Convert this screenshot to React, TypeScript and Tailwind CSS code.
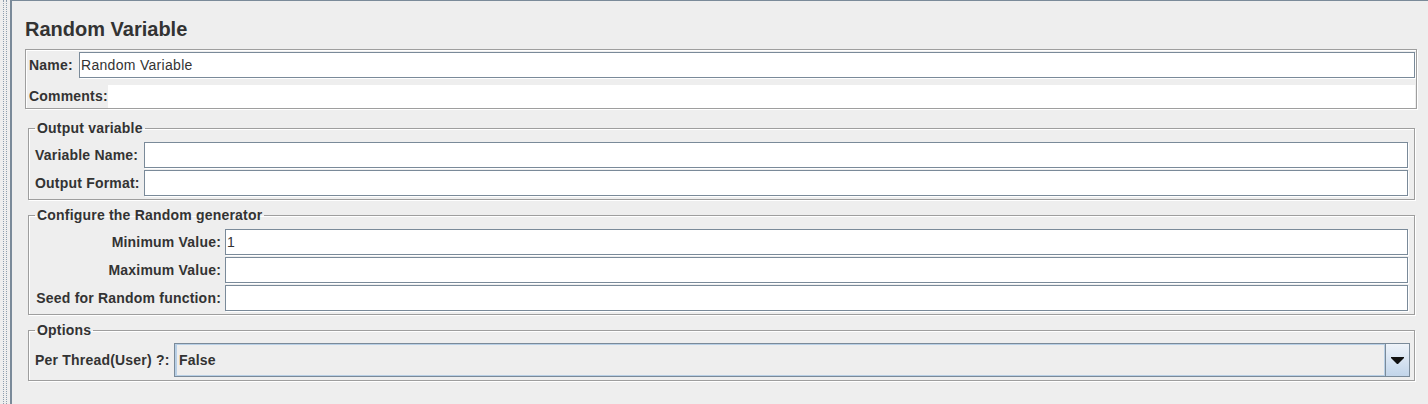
import React from "react";

// etched border like the Swing Metal look: grey line with a white line beside it
const etched = "border border-[#9e9e9e] shadow-[inset_1px_1px_0_#fff,1px_1px_0_#fff]";

function TextField({ value = "" }: { value?: string }) {
  return (
    <input
      readOnly
      value={value}
      className="h-[26px] w-full min-w-0 border border-[#7a8a99] bg-white pl-[1px] text-[14px] tracking-[0.3px] text-[#333] shadow-[1px_1px_0_#fff] outline-none"
    />
  );
}

function Group({ title, className = "", children }: { title: string; className?: string; children: React.ReactNode }) {
  return (
    <fieldset className={`ml-[3px] mr-[2px] pl-[6px] ${etched} ${className}`}>
      <legend className="px-[2px] text-[14px] font-bold leading-[16px] tracking-[0.2px] text-[#333]">{title}</legend>
      {children}
    </fieldset>
  );
}

export default function App() {
  return (
    <div className="flex h-[404px] w-[1428px] overflow-hidden bg-[#eeeeee] font-['Liberation_Sans',Arial,sans-serif] text-[#333]">
      {/* split pane handle */}
      <div className="flex w-[10px] shrink-0">
        <div className="ml-[3px] w-[4px] border-x border-dotted border-[#8e9eae]" />
      </div>

      <main className="flex min-w-0 flex-1 flex-col border-l-2 border-t border-[#7a8a99] pl-[13px] pr-[11px]">
        <h1 className="pt-[16px] text-[20px] font-bold leading-[24px]">Random Variable</h1>

        {/* Name / comments */}
        <div className={`mt-[8px] pl-[3px] pr-[1px] pt-[2px] tracking-[0.2px] ${etched}`}>
          <div className="flex items-center">
            <label className="w-[50px] shrink-0 whitespace-nowrap text-[14px] font-bold">Name:</label>
            <TextField value="Random Variable" />
          </div>
          <div className="mt-[7px] flex h-[23px]">
            <label className="flex w-[79px] shrink-0 items-center whitespace-nowrap text-[14px] font-bold">Comments:</label>
            <div className="flex-1 bg-white" />
          </div>
        </div>

        <Group title="Output variable" className="mt-[11px] pb-[3px] pr-[6px]">
          <div className="mt-[6px] grid grid-cols-[104px_1fr] items-center gap-x-[5px] gap-y-[2px] whitespace-nowrap text-[14px] tracking-[0.2px]">
            <label className="font-bold">Variable Name:</label>
            <TextField />
            <label className="font-bold">Output Format:</label>
            <TextField />
          </div>
        </Group>

        <Group title="Configure the Random generator" className="mt-[7px] pb-[3px] pr-[6px]">
          <div className="mt-[6px] grid grid-cols-[186px_1fr] items-center gap-x-[4px] gap-y-[2px] whitespace-nowrap text-[14px] tracking-[0.2px]">
            <label className="text-right font-bold">Minimum Value:</label>
            <TextField value="1" />
            <label className="text-right font-bold">Maximum Value:</label>
            <TextField />
            <label className="text-right font-bold">Seed for Random function:</label>
            <TextField />
          </div>
        </Group>

        <Group title="Options" className="mt-[7px] pb-[3px] pr-[4px]">
          <div className="mt-[5px] flex items-center gap-[4px] whitespace-nowrap text-[14px] tracking-[0.2px]">
            <label className="w-[135px] shrink-0 font-bold">Per Thread(User) ?:</label>
            <div className="flex h-[34px] flex-1 border border-[#7a8a99]">
              <div className="flex flex-1 items-center border border-l-2 border-[#b8cfe5] bg-[#eeeeee] pl-[2px] font-bold">
                False
              </div>
              <div className="flex w-[24px] items-center justify-center border-l border-[#7a8a99] bg-linear-to-b from-[#eef3f9] to-[#c2d5ea]">
                <svg width="13" height="7" viewBox="0 0 13 7">
                  <path d="M0 0h13v1L7 7H6L0 1z" fill="#111" />
                </svg>
              </div>
            </div>
          </div>
        </Group>
      </main>
    </div>
  );
}
